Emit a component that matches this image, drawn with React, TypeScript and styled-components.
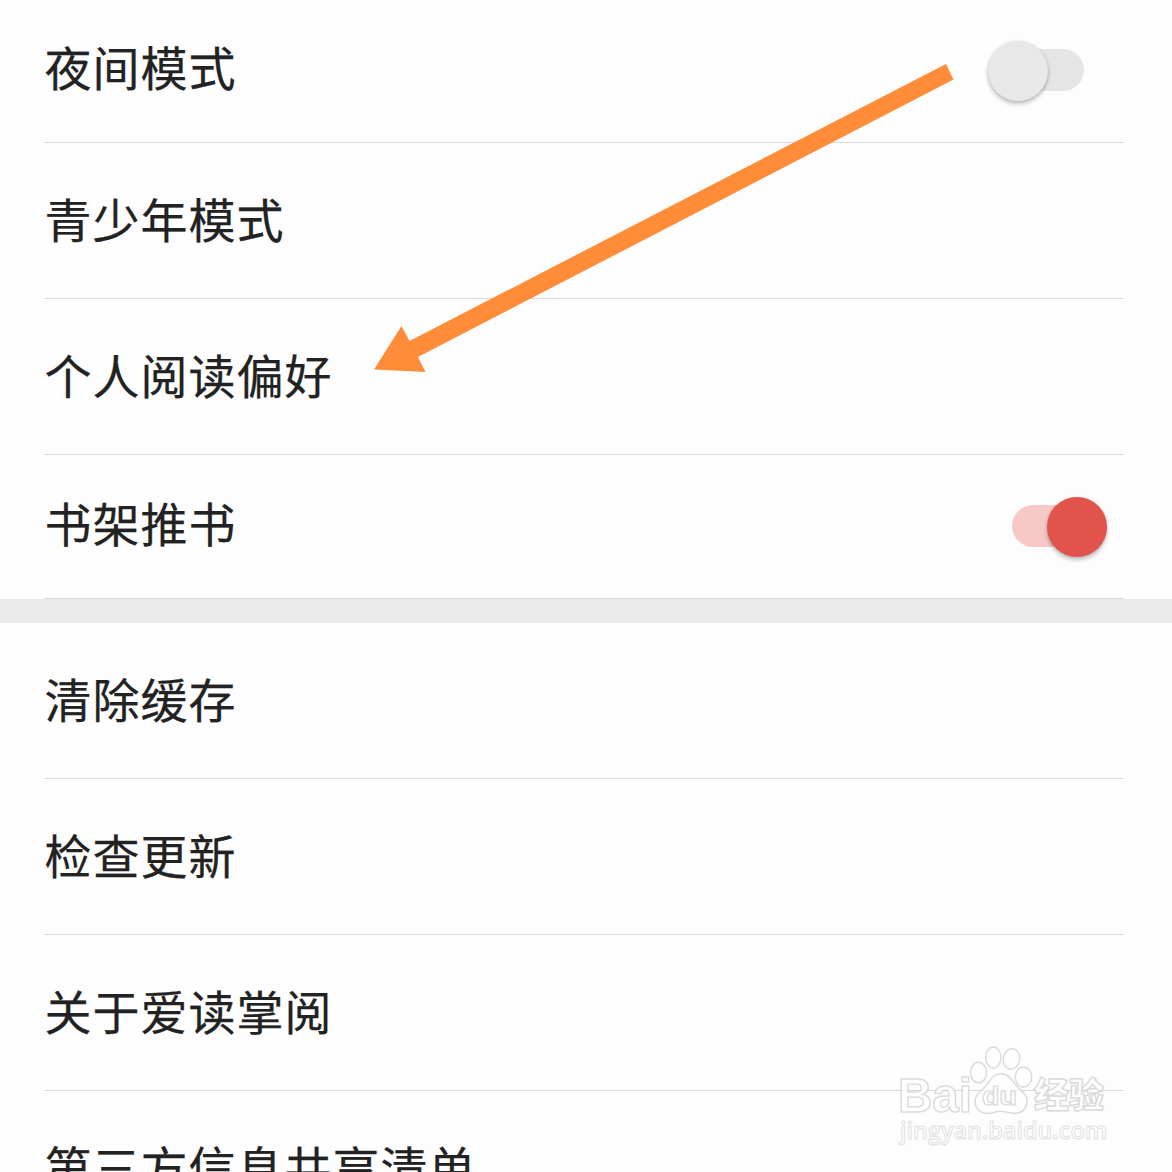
import React from "react";
import styled, { createGlobalStyle } from "styled-components";

const GlobalStyle = createGlobalStyle`
  * { box-sizing: border-box; }
  body { margin: 0; background: #fdfdfd; overflow: hidden; }
`;

const Screen = styled.main`
  position: relative;
  display: flex;
  flex-direction: column;
  width: 1172px;
  height: 1172px;
  overflow: hidden;
  background: #fdfdfd;
  color: #222;
  font-family: "Noto Sans CJK SC", sans-serif;
`;

const Group = styled.section<{ $flush?: boolean }>`
  display: flex;
  flex-direction: column;
  flex: none;
  padding: 0 48px 0 44px;
  margin-top: ${(p) => (p.$flush ? "-1px" : "0")};
`;

const Row = styled.div<{ $compact?: boolean }>`
  display: flex;
  align-items: center;
  justify-content: space-between;
  flex: none;
  height: ${(p) => (p.$compact ? 144 : 156)}px;
  border-bottom: 1px solid #d9d9d9;
`;

const Label = styled.span<{ $compact?: boolean }>`
  font-size: 47px;
  letter-spacing: 1px;
  line-height: 72px;
  padding: 0 0 ${(p) => (p.$compact ? 9 : 5)}px 0.5px;
  white-space: nowrap;
  -webkit-text-stroke: 0.25px #222;
`;

const Divider = styled.div`
  flex: none;
  height: 24px;
  background: #eaeaea;
`;

const Track = styled.div<{ $on: boolean }>`
  display: flex;
  align-items: center;
  justify-content: ${(p) => (p.$on ? "flex-end" : "flex-start")};
  width: 72px;
  height: 42px;
  border-radius: 21px;
  margin: 0 40px 1px 0;
  background: ${(p) => (p.$on ? "#f6c9c7" : "#e5e5e5")};
`;

const Thumb = styled.div<{ $on: boolean }>`
  flex: none;
  width: 60px;
  height: 60px;
  border-radius: 50%;
  margin: 1px ${(p) => (p.$on ? "-23.4px" : "-24px")} 0;
  background: ${(p) => (p.$on ? "#e2534b" : "#e8e8e8")};
  box-shadow: 0 3px 4px rgba(0, 0, 0, 0.24), 0 0 3px rgba(0, 0, 0, 0.1);
`;

const Arrow = styled.svg`
  position: absolute;
  left: 370px;
  top: 60px;
`;

const Watermark = styled.svg`
  position: absolute;
  left: 890px;
  top: 1040px;
  opacity: 0.8;
  fill: #fff;
  stroke: #d2d2d2;
  stroke-width: 1.4px;
  stroke-linejoin: round;
`;

const LatinMark = styled.text`
  font: 700 49px "Liberation Sans", sans-serif;
`;

const HanMark = styled.text`
  font: 900 35px "Noto Sans CJK SC", sans-serif;
`;

const PawMark = styled.text`
  font: 700 26px "Liberation Sans", sans-serif;
  stroke-width: 1.2px;
`;

const SiteMark = styled.text`
  font: 600 24px "Open Sans", sans-serif;
  stroke: #dadada;
  stroke-width: 1px;
`;

type Item = { label: string; on?: boolean };

const reading: Item[] = [
  { label: "夜间模式", on: false },
  { label: "青少年模式" },
  { label: "个人阅读偏好" },
  { label: "书架推书", on: true },
];

const general: Item[] = [
  { label: "清除缓存" },
  { label: "检查更新" },
  { label: "关于爱读掌阅" },
  { label: "第三方信息共享清单" },
];

function Setting({ label, on }: Item) {
  const compact = on !== undefined;
  return (
    <Row $compact={compact}>
      <Label $compact={compact}>{label}</Label>
      {on !== undefined && (
        <Track $on={on}>
          <Thumb $on={on} />
        </Track>
      )}
    </Row>
  );
}

export default function App() {
  return (
    <>
      <GlobalStyle />
      <Screen>
        <Group $flush>
          {reading.map((item) => (
            <Setting key={item.label} {...item} />
          ))}
        </Group>
        <Divider />
        <Group>
          {general.map((item) => (
            <Setting key={item.label} {...item} />
          ))}
        </Group>
        <Arrow width="590" height="320" viewBox="370 60 590 320">
          <path d="M374 369.5 401.5 326 409.5 341 946 64 953.5 79.500 418 357 425.500 372Z" fill="#ff8c39" stroke="none" />
        </Arrow>
        <Watermark width="230" height="112" viewBox="890 1040 230 112">
          <LatinMark x="898" y="1111.500" textLength="74" lengthAdjust="spacingAndGlyphs">Bai</LatinMark>
          <HanMark x="1034" y="1108" textLength="70" lengthAdjust="spacingAndGlyphs">经验</HanMark>
          <SiteMark x="900" y="1139" textLength="207" lengthAdjust="spacingAndGlyphs">jingyan.baidu.com</SiteMark>
          <ellipse cx="978.500" cy="1072.500" rx="8" ry="10.200" />
          <ellipse cx="993.300" cy="1057.500" rx="7.700" ry="10.500" />
          <ellipse cx="1011.500" cy="1059" rx="8.200" ry="10.300" transform="rotate(8 1011.5 1059)" />
          <ellipse cx="1023.500" cy="1077" rx="8.200" ry="10" />
          <path d="M1000.500 1073.800C992 1073.800 990 1082 984 1088C978 1093 973.500 1098 975.500 1105C978.500 1114 988 1114 993 1112.800C998 1111 1003 1111 1008 1112.500C1015 1114 1024 1114 1026.500 1105C1029 1097 1024 1093 1018.500 1088C1012 1081 1010 1073.800 1000.500 1073.800Z" />
          <PawMark x="982" y="1105" textLength="35" lengthAdjust="spacingAndGlyphs">du</PawMark>
        </Watermark>
      </Screen>
    </>
  );
}
